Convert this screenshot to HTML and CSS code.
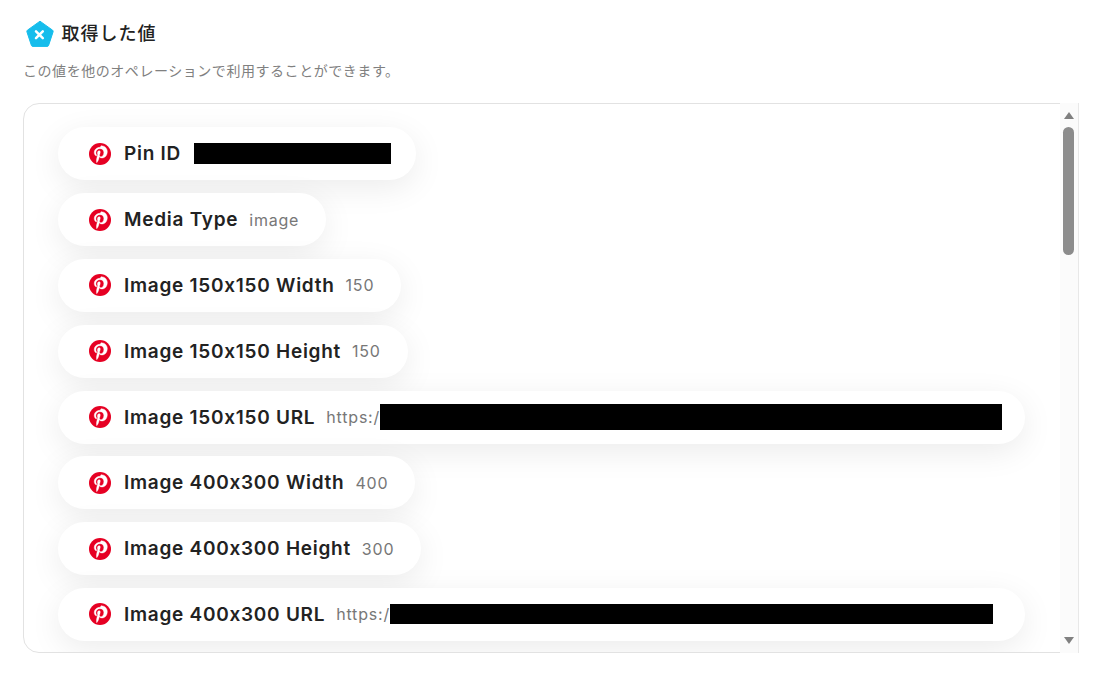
FILE: index.html
```html
<!DOCTYPE html>
<html lang="ja">
<head>
  <meta charset="UTF-8" />
  <title>取得した値</title>
  <link rel="stylesheet" href="styles.css">
</head>
<body>
  <div class="section-title">
    <svg class="title-icon" viewBox="0 0 28 28" width="28" height="28">
      <path d="M14 1.200 L26.600 10.200 Q27.400 10.800 27.100 11.800 L22.600 25.400 Q22.200 26.400 21.200 26.400 L6.800 26.400 Q5.800 26.400 5.400 25.400 L0.900 11.800 Q0.600 10.800 1.400 10.200 Z" fill="#16bdec" stroke="#16bdec" stroke-width="1" stroke-linejoin="round"/>
      <path d="M10 11.300 L16.800 18.100 M16.800 11.300 L10 18.100" stroke="#fff" stroke-width="2.500" stroke-linecap="round"/>
    </svg>
    <h2>取得した値</h2>
  </div>
  <p class="section-note">この値を他のオペレーションで利用することができます。</p>

  <div class="value-box">
    <div class="value-list">
      <div class="value-row">
        <svg class="pin-icon" viewBox="0 0 24 24"><use href="#pin"/></svg>
        <span class="value-name">Pin ID</span>
        <span class="redacted redact-id"></span>
      </div>
      <div class="value-row">
        <svg class="pin-icon" viewBox="0 0 24 24"><use href="#pin"/></svg>
        <span class="value-name">Media Type</span>
        <span class="value-text">image</span>
      </div>
      <div class="value-row">
        <svg class="pin-icon" viewBox="0 0 24 24"><use href="#pin"/></svg>
        <span class="value-name">Image 150x150 Width</span>
        <span class="value-text">150</span>
      </div>
      <div class="value-row">
        <svg class="pin-icon" viewBox="0 0 24 24"><use href="#pin"/></svg>
        <span class="value-name">Image 150x150 Height</span>
        <span class="value-text">150</span>
      </div>
      <div class="value-row wide">
        <svg class="pin-icon" viewBox="0 0 24 24"><use href="#pin"/></svg>
        <span class="value-name">Image 150x150 URL</span>
        <span class="value-text">https:/</span><span class="redacted redact-url-a"></span>
      </div>
      <div class="value-row">
        <svg class="pin-icon" viewBox="0 0 24 24"><use href="#pin"/></svg>
        <span class="value-name">Image 400x300 Width</span>
        <span class="value-text">400</span>
      </div>
      <div class="value-row">
        <svg class="pin-icon" viewBox="0 0 24 24"><use href="#pin"/></svg>
        <span class="value-name">Image 400x300 Height</span>
        <span class="value-text">300</span>
      </div>
      <div class="value-row wide">
        <svg class="pin-icon" viewBox="0 0 24 24"><use href="#pin"/></svg>
        <span class="value-name">Image 400x300 URL</span>
        <span class="value-text">https:/</span><span class="redacted redact-url-b"></span>
      </div>
    </div>
    <div class="scroll-track">
      <span class="arrow-up"></span>
      <span class="scroll-thumb"></span>
      <span class="arrow-down"></span>
    </div>
  </div>

  <svg class="defs" width="0" height="0">
    <symbol id="pin" viewBox="0 0 24 24">
      <circle cx="12" cy="12" r="12" fill="#e60023"/>
      <path d="M12.200 4.600c-4.200 0-6.500 2.800-6.500 5.800 0 1.400.8 3.200 2 3.700.4.200.4 0 .6-.8 0-.2 0-.4-.1-.6-.4-.5-.7-1.300-.7-2.200 0-2.200 1.700-4.300 4.500-4.300 2.500 0 4.200 1.700 4.200 4.100 0 2.700-1.400 4.600-3.200 4.600-1 0-1.800-.8-1.500-1.800.3-1.200.8-2.400.8-3.300 0-.8-.4-1.400-1.300-1.400-1 0-1.800 1-1.800 2.400 0 .9.300 1.500.3 1.500l-1.200 5.100c-.3 1.200-.1 3.100 0 3.900 0 .1.200.2.300.1.300-.4 1.400-1.900 1.900-3.500.1-.5.800-2.900.8-2.900.4.700 1.500 1.400 2.700 1.400 3.600 0 6-3.100 6-7.100 0-3.100-2.600-6.400-6.800-6.400z" fill="#fff" stroke="#fff" stroke-width="0.4"/>
    </symbol>
  </svg>
</body>
</html>
```
FILE: styles.css
```css
body {
  margin: 0;
  background: #fff;
  color: #222;
  font-family: Inter, "Noto Sans CJK JP", sans-serif;
  padding: 20px 23px 0;
}

.section-title {
  display: flex;
  align-items: center;
  gap: 8px;
  padding-left: 2.5px;
}

.title-icon {
  flex: none;
}

.section-title h2 {
  margin: 0;
  font-size: 18px;
  font-weight: 500;
  letter-spacing: 1px;
  line-height: 28px;
  color: #222;
}

.section-note {
  margin: 11px 0 0;
  font-size: 14px;
  letter-spacing: 0.55px;
  line-height: 24px;
  color: #808080;
}

.value-box {
  display: flex;
  width: 1054px;
  height: 548px;
  margin-top: 20px;
  border: 1px solid #e2e2e2;
  border-radius: 16px;
}

.value-list {
  flex: 1;
  min-width: 0;
  overflow: hidden;
  border-radius: 16px 0 0 16px;
  padding: 23.4px 0 0 34px;
}

.value-row {
  display: flex;
  align-items: center;
  width: fit-content;
  height: 53px;
  box-sizing: border-box;
  margin-bottom: 12.8px;
  padding: 0 27px 0 30.5px;
  border-radius: 27px;
  background: #fff;
  box-shadow: 0 8px 32px rgba(0, 0, 0, 0.08);
}

.value-row.wide {
  width: 967px;
}

.pin-icon {
  flex: none;
  width: 22px;
  height: 22px;
  margin-right: 13.5px;
}

.value-name {
  font-size: 19px;
  font-weight: 600;
  letter-spacing: 0.73px;
  white-space: nowrap;
  color: #222;
}

.value-text {
  margin-left: 11px;
  font-size: 16px;
  letter-spacing: 0.8px;
  color: #777;
  white-space: nowrap;
}

.redacted {
  display: block;
  flex: none;
  background: #000;
}

.redact-id {
  width: 197px;
  height: 21px;
  margin: 0 -2px 0 13px;
}

.redact-url-a {
  width: 622px;
  height: 26px;
}

.redact-url-b {
  width: 603px;
  height: 20px;
}

.scroll-track {
  position: relative;
  flex: none;
  width: 18px;
  margin: -1px -1px -1px 0;
  border-right: 1px solid #e8e8e8;
  background: #fbfbfb;
}

.scroll-thumb {
  position: absolute;
  left: 3px;
  top: 24px;
  width: 11px;
  height: 128px;
  border-radius: 6px;
  background: #8c8c8c;
}

.arrow-up,
.arrow-down {
  position: absolute;
  left: 4px;
  width: 0;
  height: 0;
  border-left: 5px solid transparent;
  border-right: 5px solid transparent;
}

.arrow-up {
  top: 9px;
  border-bottom: 7px solid #808080;
}

.arrow-down {
  bottom: 9px;
  border-top: 7px solid #808080;
}

.defs {
  position: absolute;
}
```
